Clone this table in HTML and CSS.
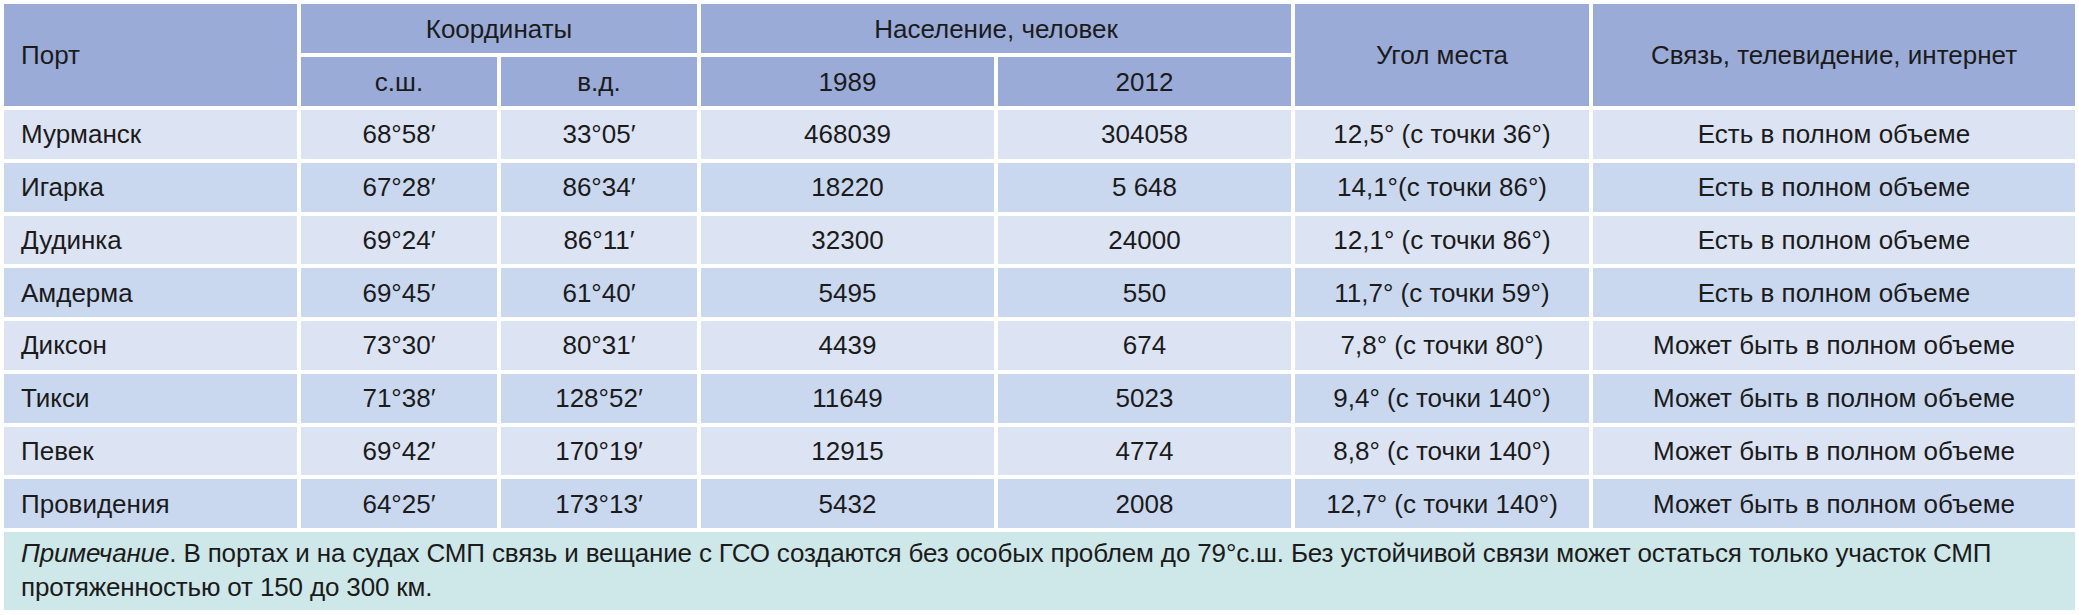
FILE: index.html
```html
<!DOCTYPE html>
<html lang="ru">
<head>
<meta charset="utf-8">
<title>Порты СМП</title>
<link rel="stylesheet" href="styles.css">
</head>
<body>
<table class="ports">
  <colgroup>
    <col class="c-port">
    <col class="c-coord">
    <col class="c-coord">
    <col class="c-pop">
    <col class="c-pop">
    <col class="c-angle">
    <col class="c-link">
  </colgroup>
  <thead>
    <tr class="h1">
      <th rowspan="2" class="port">Порт</th>
      <th colspan="2">Координаты</th>
      <th colspan="2">Население, человек</th>
      <th rowspan="2">Угол места</th>
      <th rowspan="2">Связь, телевидение, интернет</th>
    </tr>
    <tr class="h2">
      <th>с.ш.</th>
      <th>в.д.</th>
      <th>1989</th>
      <th>2012</th>
    </tr>
  </thead>
  <tbody>
    <tr class="odd"><td class="port">Мурманск</td><td>68°58′</td><td>33°05′</td><td>468039</td><td>304058</td><td>12,5° (с точки 36°)</td><td>Есть в полном объеме</td></tr>
    <tr class="even"><td class="port">Игарка</td><td>67°28′</td><td>86°34′</td><td>18220</td><td>5 648</td><td>14,1°(с точки 86°)</td><td>Есть в полном объеме</td></tr>
    <tr class="odd"><td class="port">Дудинка</td><td>69°24′</td><td>86°11′</td><td>32300</td><td>24000</td><td>12,1° (с точки 86°)</td><td>Есть в полном объеме</td></tr>
    <tr class="even"><td class="port">Амдерма</td><td>69°45′</td><td>61°40′</td><td>5495</td><td>550</td><td>11,7° (с точки 59°)</td><td>Есть в полном объеме</td></tr>
    <tr class="odd"><td class="port">Диксон</td><td>73°30′</td><td>80°31′</td><td>4439</td><td>674</td><td>7,8° (с точки 80°)</td><td>Может быть в полном объеме</td></tr>
    <tr class="even"><td class="port">Тикси</td><td>71°38′</td><td>128°52′</td><td>11649</td><td>5023</td><td>9,4° (с точки 140°)</td><td>Может быть в полном объеме</td></tr>
    <tr class="odd"><td class="port">Певек</td><td>69°42′</td><td>170°19′</td><td>12915</td><td>4774</td><td>8,8° (с точки 140°)</td><td>Может быть в полном объеме</td></tr>
    <tr class="even"><td class="port">Провидения</td><td>64°25′</td><td>173°13′</td><td>5432</td><td>2008</td><td>12,7° (с точки 140°)</td><td>Может быть в полном объеме</td></tr>
  </tbody>
  <tfoot>
    <tr class="note-row">
      <td colspan="7" class="note"><em>Примечание</em>. В портах и на судах СМП связь и вещание с ГСО создаются без особых проблем до 79°с.ш. Без устойчивой связи может остаться только участок СМП протяженностью от 150 до 300 км.</td>
    </tr>
  </tfoot>
</table>
</body>
</html>
```

FILE: styles.css
```css
html, body {
  margin: 0;
  padding: 0;
  background: #ffffff;
}

body {
  font-family: "Liberation Sans", Arial, sans-serif;
  font-size: 26px;
  color: #1b1b1b;
}

.ports {
  width: 2079px;
  table-layout: fixed;
  border-collapse: separate;
  border-spacing: 4px;
}

.c-port { width: 293px; }
.c-coord { width: 196px; }
.c-pop { width: 293px; }
.c-angle { width: 294px; }
.c-link { width: 482px; }

.ports th,
.ports td {
  padding: 0;
  text-align: center;
  vertical-align: middle;
  font-weight: normal;
  white-space: nowrap;
  line-height: 30px;
}

.ports th {
  background: #9aabd7;
}

.h1 th { height: 49px; }
.h2 th { height: 49px; }

.ports td { height: 48.75px; }

.ports .port {
  text-align: left;
  padding-left: 17px;
}

.odd td { background: #dce3f3; }
.even td { background: #c9d8ef; }

.ports td.note {
  background: #cee7e8;
  text-align: left;
  white-space: normal;
  height: 78px;
  padding: 3px 17px 5px 17px;
  line-height: 34px;
  letter-spacing: -0.15px;
  box-sizing: border-box;
}
```
